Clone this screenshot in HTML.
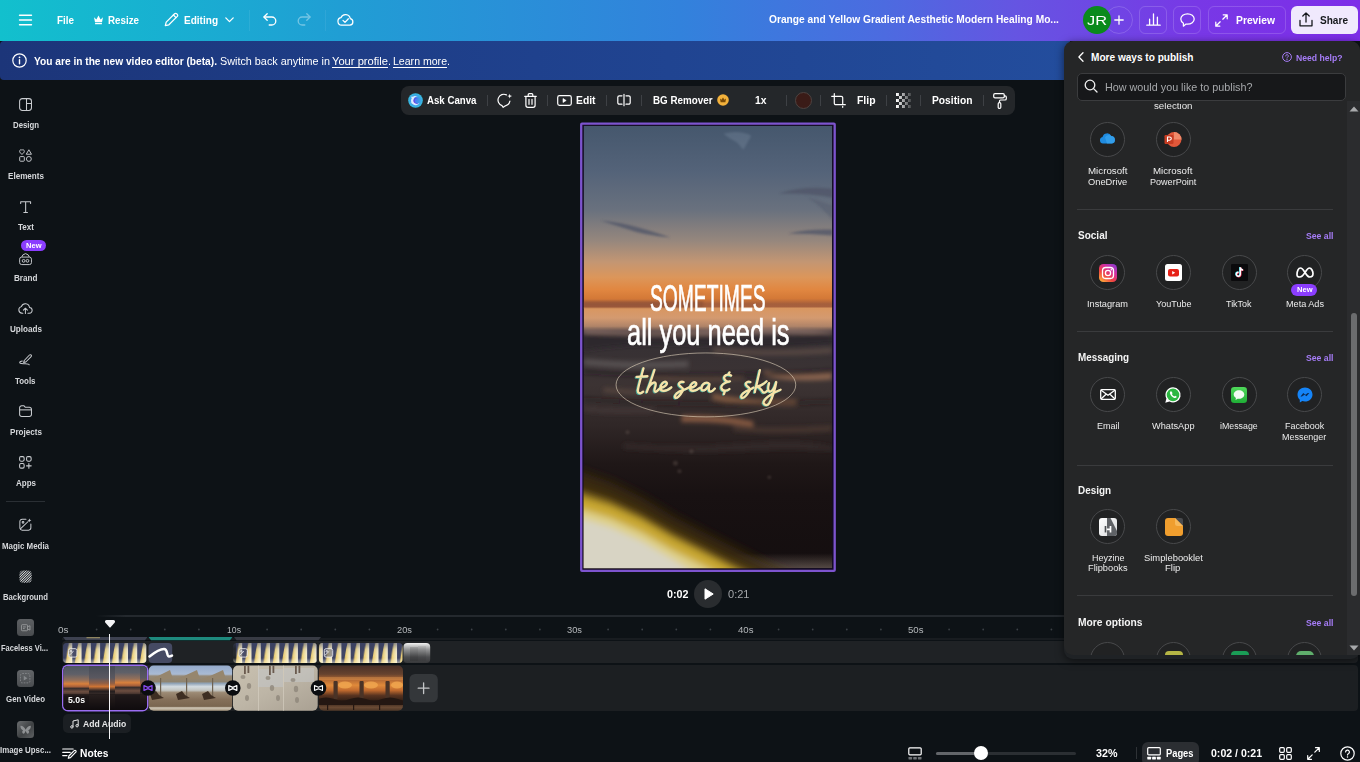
<!DOCTYPE html>
<html><head><meta charset="utf-8">
<style>
*{box-sizing:border-box;margin:0;padding:0}
html,body{width:1360px;height:762px;overflow:hidden;background:#0d1216;font-family:"Liberation Sans",sans-serif;color:#fff}
.abs{position:absolute}
svg{display:block;overflow:visible}
#top{position:absolute;left:0;top:0;width:1360px;height:40.700px;background:linear-gradient(90deg,#12c0cd 0%,#18b0d1 12%,#209ed4 25%,#3282dc 50%,#4c6be0 65%,#6654e2 75%,#7838e6 88%,#7d2de8 100%)}
#banner{position:absolute;left:0;top:40.600px;width:1070px;height:39.800px;background:linear-gradient(90deg,#1c3579 0%,#1f418d 50%,#234d9d 100%);border-radius:4px 0 0 4px}
.ob{position:absolute;top:6px;height:28px;border-radius:6px;border:1px solid rgba(255,255,255,.16)}
#tb{position:absolute;left:401px;top:86px;width:614px;height:29px;background:#24272a;border-radius:8px}
.sep{position:absolute;top:95px;width:1px;height:11px;background:#3e4145}
#panel{position:absolute;left:1064px;top:40.500px;width:296px;height:614.500px;background:#252627;border-radius:9px 9px 0 9px}
.hr{position:absolute;left:1077px;width:256px;height:1px;background:#3a3b3d}
.circ{position:absolute;margin:.400px;width:35.200px;height:35.200px;border-radius:50%;border:1px solid #48494b;background:#212223}
</style></head><body>
<!-- TOP BAR -->
<div id="top"></div>
<svg class="abs" style="left:19px;top:14px" width="13" height="12" viewBox="0 0 13 12"><path d="M0.5 1.2h12M0.5 6h12M0.5 10.8h12" stroke="#fff" stroke-width="1.4" stroke-linecap="round"/></svg>
<span style="position:absolute;left:57px;top:15.2px;font-size:10.5px;font-weight:bold;color:#fff;white-space:nowrap;line-height:1;transform:scaleX(0.940);transform-origin:0 50%;">File</span>
<svg class="abs" style="left:93px;top:14px" width="11" height="11" viewBox="0 0 11 11"><path d="M1 3.2l2.4 2.2L5.5 1.6l2.1 3.8L10 3.2l-1 5H2z" fill="#fff"/><rect x="2" y="9" width="7" height="1.2" rx=".5" fill="#fff"/></svg>
<span style="position:absolute;left:108px;top:15.2px;font-size:10.5px;font-weight:bold;color:#fff;white-space:nowrap;line-height:1;transform:scaleX(0.931);transform-origin:0 50%;">Resize</span>
<svg class="abs" style="left:164px;top:12px" width="15" height="15" viewBox="0 0 15 15" fill="none" stroke="#fff" stroke-width="1.25" stroke-linejoin="round" stroke-linecap="round"><path d="M1.3 13.7l.9-3.6L10.6 1.7a1.4 1.4 0 0 1 2 0l.7.7a1.4 1.4 0 0 1 0 2L4.9 12.8z"/><path d="M9.4 3l2.6 2.6"/></svg>
<span style="position:absolute;left:184px;top:15.2px;font-size:10.5px;font-weight:bold;color:#fff;white-space:nowrap;line-height:1;transform:scaleX(0.956);transform-origin:0 50%;">Editing</span>
<svg class="abs" style="left:225px;top:17px" width="9" height="6" viewBox="0 0 9 6" fill="none" stroke="#fff" stroke-width="1.3" stroke-linecap="round" stroke-linejoin="round"><path d="M.8.9l3.7 3.7L8.2.9"/></svg>
<div class="abs" style="left:249px;top:10px;width:1px;height:21px;background:rgba(255,255,255,.07)"></div>
<svg class="abs" style="left:263px;top:13px" width="14" height="13" viewBox="0 0 14 13" fill="none" stroke="#fff" stroke-width="1.3" stroke-linecap="round" stroke-linejoin="round"><path d="M4.2.8L.9 4l3.3 3.2"/><path d="M1.2 4h7.6a4 4 0 0 1 0 8H6.2"/></svg>
<svg class="abs" style="left:297px;top:13px;opacity:.38" width="14" height="13" viewBox="0 0 14 13" fill="none" stroke="#fff" stroke-width="1.3" stroke-linecap="round" stroke-linejoin="round"><path d="M9.8.8L13.1 4 9.8 7.2"/><path d="M12.8 4H5.2a4 4 0 0 0 0 8h2.6"/></svg>
<div class="abs" style="left:325px;top:10px;width:1px;height:21px;background:rgba(255,255,255,.07)"></div>
<svg class="abs" style="left:337px;top:13px" width="17" height="13" viewBox="0 0 17 13" fill="none" stroke="#fff" stroke-width="1.25" stroke-linecap="round" stroke-linejoin="round"><path d="M4.6 12.2a3.8 3.8 0 0 1-.7-7.5 4.9 4.9 0 0 1 9.4 1 3.3 3.3 0 0 1-.4 6.5z"/><path d="M6 7.4l2 2 3.4-3.6"/></svg>
<span style="position:absolute;left:769px;top:15.4px;font-size:10.08px;font-weight:bold;color:#fff;white-space:nowrap;line-height:1;transform:scaleX(1.013);transform-origin:0 50%;">Orange and Yellow Gradient Aesthetic Modern Healing Mo...</span>
<div class="abs" style="left:1105px;top:6px;width:28px;height:28px;border-radius:50%;border:1px solid rgba(255,255,255,.16)"></div>
<svg class="abs" style="left:1114px;top:15px" width="10" height="10" viewBox="0 0 10 10" stroke="#fff" stroke-width="1.3" stroke-linecap="round"><path d="M5 .8v8.4M.8 5h8.4"/></svg>
<div class="abs" style="left:1082.700px;top:6px;width:28px;height:28px;border-radius:50%;background:#0a8a1c"></div>
<span style="position:absolute;left:1087px;top:14.2px;font-size:13.44px;font-weight:normal;color:#fff;white-space:nowrap;line-height:1;transform:scaleX(1.217);transform-origin:0 50%;">JR</span>
<div class="ob" style="left:1139px;width:28px"></div>
<svg class="abs" style="left:1146px;top:13px" width="15" height="13" viewBox="0 0 15 13" stroke="#fff" stroke-width="1.3" stroke-linecap="round" fill="none"><path d="M.8 12.2h13.4M3.6 12V6.2M7.5 12V1M11.4 12V4.2"/></svg>
<div class="ob" style="left:1173px;width:28px"></div>
<svg class="abs" style="left:1180px;top:13px" width="15" height="14" viewBox="0 0 15 14" fill="none" stroke="#fff" stroke-width="1.25" stroke-linejoin="round"><path d="M7.5.8c3.7 0 6.7 2.3 6.7 5.2s-3 5.2-6.7 5.2c-.5 0-1 0-1.5-.1L3.4 13.2V10.200C1.800 9.200.8 7.700.8 6 .8 3.100 3.800.8 7.500.8z"/></svg>
<div class="ob" style="left:1208px;width:78px"></div>
<svg class="abs" style="left:1215px;top:14px" width="13" height="13" viewBox="0 0 13 13" fill="none" stroke="#fff" stroke-width="1.25" stroke-linecap="round" stroke-linejoin="round"><path d="M8.200.8h4v4M12 1L7.800 5.200M4.800 12.200h-4v-4M1 12l4.200-4.200"/></svg>
<span style="position:absolute;left:1236px;top:15.2px;font-size:10.5px;font-weight:bold;color:#fff;white-space:nowrap;line-height:1;transform:scaleX(0.982);transform-origin:0 50%;">Preview</span>
<div class="abs" style="left:1291px;top:6px;width:67px;height:28px;border-radius:6px;background:#f0e9fd"></div>
<svg class="abs" style="left:1299px;top:12px" width="14" height="15" viewBox="0 0 14 15" fill="none" stroke="#15181c" stroke-width="1.3" stroke-linecap="round" stroke-linejoin="round"><path d="M7 10V1M3.800 4L7 .9 10.200 4M1 8.500v5.300h12V8.500"/></svg>
<span style="position:absolute;left:1320px;top:15.2px;font-size:10.5px;font-weight:bold;color:#15181c;white-space:nowrap;line-height:1;transform:scaleX(0.959);transform-origin:0 50%;">Share</span>

<!-- BANNER -->
<div id="banner"></div>
<svg class="abs" style="left:12px;top:53px" width="15" height="15" viewBox="0 0 15 15" fill="none" stroke="#fff" stroke-width="1.2"><circle cx="7.500" cy="7.500" r="6.700"/><path d="M7.500 6.800v4" stroke-linecap="round" stroke-width="1.400"/><circle cx="7.500" cy="4.300" r=".9" fill="#fff" stroke="none"/></svg>
<span style="position:absolute;left:34px;top:55.7px;font-size:10.5px;font-weight:bold;color:#fff;white-space:nowrap;line-height:1;transform:scaleX(0.969);transform-origin:0 50%;">You are in the new video editor (beta).</span>
<span style="position:absolute;left:220px;top:55.7px;font-size:10.5px;font-weight:normal;color:#fff;white-space:nowrap;line-height:1;transform:scaleX(1.030);transform-origin:0 50%;">Switch back anytime in</span>
<span style="position:absolute;left:332px;top:55.7px;font-size:10.5px;font-weight:normal;color:#fff;white-space:nowrap;line-height:1;transform:scaleX(1.062);transform-origin:0 50%;text-decoration:underline;text-underline-offset:2px">Your profile</span>
<span style="position:absolute;left:388px;top:55.7px;font-size:10.5px;font-weight:normal;color:#fff;white-space:nowrap;line-height:1;transform:scaleX(1.027);transform-origin:0 50%;">.</span>
<span style="position:absolute;left:393px;top:55.7px;font-size:10.5px;font-weight:normal;color:#fff;white-space:nowrap;line-height:1;transform:scaleX(1.006);transform-origin:0 50%;text-decoration:underline;text-underline-offset:2px">Learn more</span>
<span style="position:absolute;left:447px;top:55.7px;font-size:10.5px;font-weight:normal;color:#fff;white-space:nowrap;line-height:1;transform:scaleX(1.027);transform-origin:0 50%;">.</span>
<!-- SIDEBAR -->

<!-- design -->
<svg class="abs" style="left:19.0px;top:98.0px" width="13.1" height="13.1" viewBox="0 0 15 15" fill="none" stroke="#c9ccd0" stroke-width="1.2"><rect x=".7" y=".7" width="13.6" height="13.6" rx="3"/><path d="M8.6.8v13.4M8.600 6.200h5.600"/></svg>
<span style="position:absolute;left:12.5px;top:121.7px;font-size:8.15px;font-weight:bold;color:#d6d8db;white-space:nowrap;line-height:1;transform:scaleX(0.960);transform-origin:0 50%;">Design</span>
<!-- elements -->
<svg class="abs" style="left:19.0px;top:149.0px" width="13.1" height="13.1" viewBox="0 0 15 15" fill="none" stroke="#c9ccd0" stroke-width="1.1" stroke-linejoin="round"><path d="M3.400 6.100C1.800 4.900.700 4 .700 2.700.700 1.600 1.500.800 2.400.800c.5 0 .8.200 1 .600.200-.4.600-.6 1-.600.900 0 1.700.8 1.700 1.900 0 1.300-1.100 2.200-2.700 3.400z"/><path d="M11.300.900l3 5.100H8.300z"/><rect x=".8" y="8.700" width="5.300" height="5.300" rx=".8"/><circle cx="11.300" cy="11.400" r="2.800"/></svg>
<span style="position:absolute;left:7.5px;top:172.7px;font-size:8.15px;font-weight:bold;color:#d6d8db;white-space:nowrap;line-height:1;transform:scaleX(0.996);transform-origin:0 50%;">Elements</span>
<!-- text -->
<svg class="abs" style="left:19.8px;top:200.9px" width="11.3" height="12.2" viewBox="0 0 13 14" fill="none" stroke="#c9ccd0" stroke-width="1.2" stroke-linecap="round" stroke-linejoin="round"><path d="M.800 2.800V.800h11.400v2M6.500.800v12.400M4.400 13.200h4.200"/></svg>
<span style="position:absolute;left:17.5px;top:223.7px;font-size:8.15px;font-weight:bold;color:#d6d8db;white-space:nowrap;line-height:1;transform:scaleX(0.993);transform-origin:0 50%;">Text</span>
<!-- brand -->
<svg class="abs" style="left:19.0px;top:252.8px" width="13.1" height="12.2" viewBox="0 0 15 14" fill="none" stroke="#c9ccd0" stroke-width="1.100" stroke-linejoin="round"><rect x=".700" y="4.700" width="13.600" height="8.600" rx="2.400"/><path d="M3.200 4.500l1.200-2.300 3.100-1.500 3.100 1.500 1.200 2.300"/><circle cx="5.300" cy="9" r="1.600"/><circle cx="9.700" cy="9" r="1.600"/></svg>
<div class="abs" style="left:21px;top:239.500px;width:25px;height:11.500px;border-radius:6px;background:#8b3dff"></div>
<span style="position:absolute;left:26px;top:242.5px;font-size:6.72px;font-weight:bold;color:#fff;white-space:nowrap;line-height:1;transform:scaleX(1.121);transform-origin:0 50%;">New</span>
<span style="position:absolute;left:14px;top:274.7px;font-size:8.15px;font-weight:bold;color:#d6d8db;white-space:nowrap;line-height:1;transform:scaleX(1.001);transform-origin:0 50%;">Brand</span>
<!-- uploads -->
<svg class="abs" style="left:18.1px;top:301.9px" width="14.8" height="12.2" viewBox="0 0 17 14" fill="none" stroke="#c9ccd0" stroke-width="1.150" stroke-linecap="round" stroke-linejoin="round"><path d="M5.600 12.800H4.600a3.800 3.800 0 0 1-.700-7.500 4.800 4.800 0 0 1 9.300.900 3.300 3.300 0 0 1-.500 6.600h-1.300"/><path d="M8.500 13.200V7.400M6.200 9.400l2.300-2.300 2.300 2.300"/></svg>
<span style="position:absolute;left:9.5px;top:325.7px;font-size:8.15px;font-weight:bold;color:#d6d8db;white-space:nowrap;line-height:1;transform:scaleX(0.998);transform-origin:0 50%;">Uploads</span>
<!-- tools -->
<svg class="abs" style="left:19.0px;top:353.0px" width="13.1" height="13.1" viewBox="0 0 15 15" fill="none" stroke="#c9ccd0" stroke-width="1.150" stroke-linecap="round" stroke-linejoin="round"><path d="M6 8.600L12 2.300a1.300 1.300 0 0 1 1.900 1.800L7.800 10.300l-2.500.700z"/><path d="M3.800 9.200c-2 .200-3 1-3 1.800 0 1.400 3.200 1.200 6.200 1.200 2.500 0 4.700.200 4.700 1.300"/></svg>
<span style="position:absolute;left:15px;top:377.7px;font-size:8.15px;font-weight:bold;color:#d6d8db;white-space:nowrap;line-height:1;transform:scaleX(0.973);transform-origin:0 50%;">Tools</span>
<!-- projects -->
<svg class="abs" style="left:19.0px;top:404.9px" width="13.1" height="12.2" viewBox="0 0 15 14" fill="none" stroke="#c9ccd0" stroke-width="1.200" stroke-linejoin="round"><path d="M.700 3.200A2.400 2.400 0 0 1 3.100.800h2.400l1.800 1.900h4.600a2.400 2.400 0 0 1 2.400 2.400v5.800a2.400 2.400 0 0 1-2.400 2.400H3.100A2.400 2.400 0 0 1 .700 10.900z"/><path d="M.800 5.600h13.400"/></svg>
<span style="position:absolute;left:9.5px;top:428.7px;font-size:8.15px;font-weight:bold;color:#d6d8db;white-space:nowrap;line-height:1;transform:scaleX(0.998);transform-origin:0 50%;">Projects</span>
<!-- apps -->
<svg class="abs" style="left:19.0px;top:456.0px" width="13.1" height="13.1" viewBox="0 0 15 15" fill="none" stroke="#c9ccd0" stroke-width="1.200" stroke-linecap="round"><rect x=".700" y=".700" width="5.200" height="5.200" rx="1.500"/><rect x="8.700" y=".700" width="5.200" height="5.200" rx="1.500"/><rect x=".700" y="8.700" width="5.200" height="5.200" rx="1.500"/><path d="M11.300 8.600v5.400M8.600 11.300h5.400"/></svg>
<span style="position:absolute;left:15.5px;top:479.7px;font-size:8.15px;font-weight:bold;color:#d6d8db;white-space:nowrap;line-height:1;transform:scaleX(0.985);transform-origin:0 50%;">Apps</span>
<div class="abs" style="left:6px;top:501px;width:39px;height:1px;background:#2a2f34"></div>
<!-- magic media -->
<svg class="abs" style="left:19.0px;top:518.0px" width="13.1" height="13.1" viewBox="0 0 15 15" fill="none" stroke="#c9ccd0" stroke-width="1.150" stroke-linecap="round" stroke-linejoin="round"><path d="M8 1.300H3.600A2.600 2.600 0 0 0 1 3.900v7.400a2.600 2.600 0 0 0 2.600 2.600h7.400a2.600 2.600 0 0 0 2.600-2.600V7"/><path d="M1.600 12.500L10.500 4"/><circle cx="4.600" cy="5" r="1" /><path d="M12 .500l.6 1.600 1.600.6-1.600.6-.6 1.600-.6-1.600-1.600-.6 1.600-.6z" fill="#c9ccd0" stroke="none"/></svg>
<span style="position:absolute;left:2px;top:542.7px;font-size:8.15px;font-weight:bold;color:#d6d8db;white-space:nowrap;line-height:1;transform:scaleX(0.973);transform-origin:0 50%;">Magic Media</span>
<!-- background -->
<svg class="abs" style="left:19.0px;top:570.0px" width="13.1" height="13.1" viewBox="0 0 15 15"><defs><pattern id="hatch" width="2" height="2" patternUnits="userSpaceOnUse" patternTransform="rotate(45)"><rect width="1" height="2" fill="#d8dadc"/></pattern></defs><rect x=".500" y=".500" width="14" height="14" rx="4.500" fill="url(#hatch)"/></svg>
<span style="position:absolute;left:3px;top:593.7px;font-size:8.15px;font-weight:bold;color:#d6d8db;white-space:nowrap;line-height:1;transform:scaleX(0.949);transform-origin:0 50%;">Background</span>
<!-- faceless -->
<div class="abs" style="left:17px;top:619px;width:17px;height:17px;border-radius:3.500px;background:linear-gradient(180deg,#5d6063,#494c4f)"></div>
<svg class="abs" style="left:20.7px;top:623.6px" width="9.6" height="7.8" viewBox="0 0 11 9" fill="none" stroke="#9a9c9e" stroke-width="1"><rect x=".500" y=".800" width="7" height="7" rx="1"/><path d="M7.500 3.200l2.800-1.200v5l-2.800-1.200M2.200 3.400h3.300M2.200 5.300h2"/></svg>
<span style="position:absolute;left:0.5px;top:644.7px;font-size:8.15px;font-weight:bold;color:#d6d8db;white-space:nowrap;line-height:1;transform:scaleX(0.923);transform-origin:0 50%;">Faceless Vi...</span>
<!-- gen video -->
<div class="abs" style="left:17px;top:670px;width:17px;height:17px;border-radius:3.500px;background:linear-gradient(180deg,#626568,#4a4d50)"></div>
<svg class="abs" style="left:20.3px;top:673.3px" width="10.4" height="10.4" viewBox="0 0 12 12" fill="none" stroke="#85888b" stroke-width="1"><rect x=".600" y=".600" width="10.800" height="10.800" rx="2" stroke-dasharray="2 1.200"/><path d="M4.300 3.300l4.300 2.700-4.300 2.700z" fill="#85888b" stroke="none"/></svg>
<span style="position:absolute;left:6px;top:695.7px;font-size:8.15px;font-weight:bold;color:#d6d8db;white-space:nowrap;line-height:1;transform:scaleX(0.974);transform-origin:0 50%;">Gen Video</span>
<!-- image upscaler -->
<div class="abs" style="left:17px;top:721px;width:17px;height:17px;border-radius:3.500px;background:linear-gradient(135deg,#6b6e70,#3e4143 55%,#5f6264)"></div>
<svg class="abs" style="left:19.8px;top:724.7px" width="11.3" height="9.6" viewBox="0 0 13 11" fill="#8e9193"><path d="M6.500 5.500C5 2 2 .500.500 1c0 3 1.500 4.500 3 5C2 7 2.500 10 4 10c1.200 0 2-2 2.500-3.500C7 8 7.800 10 9 10c1.500 0 2-3 .500-4 1.500-.500 3-2 3-5-1.500-.500-4.500 1-6 4.500z"/></svg>
<span style="position:absolute;left:0px;top:746.7px;font-size:8.15px;font-weight:bold;color:#d6d8db;white-space:nowrap;line-height:1;transform:scaleX(0.973);transform-origin:0 50%;">Image Upsc...</span>

<!-- FLOATING TOOLBAR -->
<div id="tb"></div>
<svg class="abs" style="left:408px;top:93px" width="15" height="15" viewBox="0 0 15 15"><defs><radialGradient id="ag" cx=".5" cy=".5" r=".5"><stop offset="0" stop-color="#4a7af0"/><stop offset=".55" stop-color="#3f9ae8"/><stop offset="1" stop-color="#35bfe0"/></radialGradient></defs><circle cx="7.500" cy="7.500" r="7.300" fill="url(#ag)"/><path d="M10 3.600A4.600 4.600 0 1 0 11.600 9.800 3.600 3.600 0 1 1 10 3.600z" fill="#dfeaff"/><path d="M9.800 5.200A2.900 2.900 0 1 0 10.600 9.600 2.500 2.500 0 1 1 9.800 5.200z" fill="#6a3de0"/><circle cx="4" cy="4.300" r=".7" fill="#fff"/><circle cx="3.200" cy="9.800" r=".5" fill="#fff" opacity=".8"/></svg>
<span style="position:absolute;left:427px;top:95.9px;font-size:10.08px;font-weight:bold;color:#fff;white-space:nowrap;line-height:1;transform:scaleX(0.960);transform-origin:0 50%;">Ask Canva</span>
<div class="sep" style="left:487px"></div>
<svg class="abs" style="left:497px;top:92.500px" width="16" height="15" viewBox="0 0 16 15" fill="none" stroke="#fff" stroke-width="1.200" stroke-linecap="round" stroke-linejoin="round"><path d="M9.400 1.900A5.800 5.800 0 1 0 5 12.600L6.200 14.300 8.400 12.800A5.800 5.800 0 0 0 12.900 8.200"/><path d="M12.700.700l.6 1.800 1.800.6-1.800.6-.6 1.800-.6-1.800-1.800-.6 1.800-.6z" fill="#fff" stroke="none"/></svg>
<svg class="abs" style="left:524px;top:92.500px" width="13" height="15" viewBox="0 0 13 15" fill="none" stroke="#fff" stroke-width="1.200" stroke-linecap="round" stroke-linejoin="round"><path d="M.700 3.300h11.600M4.200 3.200V1.700a1 1 0 0 1 1-1h2.600a1 1 0 0 1 1 1v1.500M1.900 3.500v8.800a2 2 0 0 0 2 2h5.200a2 2 0 0 0 2-2V3.500M5 6.300v5M8 6.300v5"/></svg>
<div class="sep" style="left:547px"></div>
<svg class="abs" style="left:557px;top:94.500px" width="15" height="11" viewBox="0 0 15 11" fill="none" stroke="#fff" stroke-width="1.200" stroke-linejoin="round"><rect x=".700" y=".700" width="13.600" height="9.600" rx="1.800"/><path d="M6 3.500l3.200 2-3.200 2z" fill="#fff" stroke-width=".600"/></svg>
<span style="position:absolute;left:576px;top:95.9px;font-size:10.08px;font-weight:bold;color:#fff;white-space:nowrap;line-height:1;transform:scaleX(1.024);transform-origin:0 50%;">Edit</span>
<div class="sep" style="left:606px"></div>
<svg class="abs" style="left:617px;top:94px" width="14" height="12" viewBox="0 0 14 12" fill="none" stroke="#fff" stroke-width="1.200" stroke-linecap="round" stroke-linejoin="round"><path d="M7 .300v11.400M5 1.800H2.300A1.500 1.500 0 0 0 .800 3.300v5.400a1.500 1.500 0 0 0 1.500 1.500H5M9 1.800h2.700a1.500 1.500 0 0 1 1.500 1.500v5.400a1.500 1.500 0 0 1-1.500 1.500H9"/></svg>
<div class="sep" style="left:641px"></div>
<span style="position:absolute;left:653px;top:95.9px;font-size:10.08px;font-weight:bold;color:#fff;white-space:nowrap;line-height:1;transform:scaleX(0.974);transform-origin:0 50%;">BG Remover</span>
<svg class="abs" style="left:717px;top:94px" width="12" height="12" viewBox="0 0 12 12"><circle cx="6" cy="6" r="5.800" fill="#f2b13b"/><path d="M3 4.500l1.500 1.300L6 3.500l1.500 2.300L9 4.500l-.600 3.700H3.600z" fill="#7a4a05"/></svg>
<span style="position:absolute;left:755px;top:95.9px;font-size:10.08px;font-weight:bold;color:#fff;white-space:nowrap;line-height:1;transform:scaleX(1.025);transform-origin:0 50%;">1x</span>
<div class="sep" style="left:786px"></div>
<div class="abs" style="left:795px;top:92px;width:17px;height:17px;border-radius:50%;background:#3a1b17;border:1px solid #4d4341"></div>
<div class="sep" style="left:820px"></div>
<svg class="abs" style="left:831px;top:93px" width="15" height="15" viewBox="0 0 15 15" fill="none" stroke="#fff" stroke-width="1.200" stroke-linecap="round" stroke-linejoin="round"><path d="M3.300.700v9.500a1.500 1.500 0 0 0 1.500 1.500h9.500M.700 3.300h9.500a1.500 1.500 0 0 1 1.500 1.500v6.200M11.700 13.300v1"/></svg>
<span style="position:absolute;left:857px;top:95.9px;font-size:10.08px;font-weight:bold;color:#fff;white-space:nowrap;line-height:1;transform:scaleX(1.032);transform-origin:0 50%;">Flip</span>
<div class="sep" style="left:886px"></div>
<svg class="abs" style="left:896px;top:93px" width="15" height="15" viewBox="0 0 15 15"><defs><pattern id="chk" width="6" height="6" patternUnits="userSpaceOnUse"><rect width="3" height="3" fill="#fff"/><rect x="3" y="3" width="3" height="3" fill="#fff"/></pattern><linearGradient id="chf" x1="0" x2="1"><stop offset="0" stop-color="#fff"/><stop offset="1" stop-color="#fff" stop-opacity=".150"/></linearGradient><mask id="chm"><rect width="15" height="15" fill="url(#chf)"/></mask></defs><rect width="15" height="15" fill="url(#chk)" mask="url(#chm)"/></svg>
<div class="sep" style="left:920px"></div>
<span style="position:absolute;left:932px;top:95.9px;font-size:10.08px;font-weight:bold;color:#fff;white-space:nowrap;line-height:1;transform:scaleX(1.018);transform-origin:0 50%;">Position</span>
<div class="sep" style="left:983px"></div>
<svg class="abs" style="left:993px;top:92.500px" width="14" height="16" viewBox="0 0 14 16" fill="none" stroke="#fff" stroke-width="1.200" stroke-linecap="round" stroke-linejoin="round"><rect x=".700" y=".700" width="10.600" height="4.200" rx="1.300"/><path d="M11.300 2.800h.700a1.300 1.300 0 0 1 1.300 1.300v1.600a1.300 1.300 0 0 1-1.300 1.300H7.500a1 1 0 0 0-1 1V9.500"/><rect x="5.200" y="9.600" width="2.600" height="5.700" rx="1.100"/></svg>
<!-- CANVAS -->
<svg class="abs" style="left:570px;top:115px" width="280" height="465" viewBox="570 115 280 465"><rect x="581.200" y="123.700" width="253.500" height="447.100" rx=".8" fill="#130b22" stroke="#7d54ce" stroke-width="2.300"/><svg x="583.600" y="125.700" width="248.600" height="442.500" viewBox="0 0 249 443" preserveAspectRatio="none" style="overflow:hidden">
<defs>
<linearGradient id="sky" x1="0" y1="0" x2="0" y2="1">
<stop offset="0" stop-color="#45576d"/><stop offset=".25" stop-color="#546379"/><stop offset=".46" stop-color="#69717e"/><stop offset=".63" stop-color="#96877d"/><stop offset=".745" stop-color="#c39673"/><stop offset=".83" stop-color="#dc965a"/><stop offset=".895" stop-color="#e18741"/><stop offset=".945" stop-color="#d47937"/><stop offset=".975" stop-color="#a55f3c"/><stop offset="1" stop-color="#a86240"/>
</linearGradient>
<linearGradient id="sea" x1="0" y1="0" x2="0" y2="1">
<stop offset="0" stop-color="#d9965f"/><stop offset=".04" stop-color="#d49a70"/><stop offset=".072" stop-color="#b08468"/><stop offset=".09" stop-color="#5a4a4a"/><stop offset=".11" stop-color="#332e33"/><stop offset=".16" stop-color="#373134"/><stop offset=".3" stop-color="#3c3333"/><stop offset=".45" stop-color="#302727"/><stop offset=".6" stop-color="#1f1717"/><stop offset=".72" stop-color="#181112"/><stop offset="1" stop-color="#140e0f"/>
</linearGradient>
<linearGradient id="bg2" x1="0" y1="0" x2="0" y2="1"><stop offset="0" stop-color="#8a7a70" stop-opacity="0"/><stop offset="1" stop-color="#8a7a70" stop-opacity=".55"/></linearGradient>
<filter id="bl" x="-20%" y="-20%" width="140%" height="140%"><feGaussianBlur stdDeviation="2.200"/></filter>
<filter id="bl2"><feGaussianBlur stdDeviation="1.200"/></filter>
<filter id="bl4" x="-20%" y="-20%" width="140%" height="140%"><feGaussianBlur stdDeviation="3.200"/></filter>
<filter id="bl5" x="-20%" y="-20%" width="140%" height="140%"><feGaussianBlur stdDeviation="5.500"/></filter>
</defs>
<rect width="249" height="183" fill="url(#sky)"/>
<rect y="182" width="249" height="261" fill="url(#sea)"/>
<rect y="176" width="120" height="6" fill="#8f5238" opacity=".7" filter="url(#bl2)"/>
<!-- clouds -->
<g filter="url(#bl2)" fill="#4f5568" opacity=".75"><path d="M17 95q22 2 38 7 18 5 32 10-26-2-42-8-16-5-28-9z"/><path d="M196 68q22-8 53-5v9q-26-5-53-4z"/><path d="M205 108q20-5 44-4v6q-22-2-44-2z"/><path d="M225 72q14 10 24 22v-14z" opacity=".5"/></g>
<g filter="url(#bl2)" fill="#8394a8" opacity=".3"><path d="M140 8q16-4 28 2l-8 14-6-7q-8-4-14-9z"/></g>
<!-- waves -->
<g filter="url(#bl)"><path d="M0 210q60-6 120 0t129-4v12q-70 6-129 2T0 225z" fill="#29242a" opacity=".8"/><path d="M0 204q70 4 130 0t119 2v3q-60-2-119 1T0 208z" fill="#a98878" opacity=".5"/>
<path d="M0 233q50 5 105 2v7q-55 3-105-2z" fill="#6a6465" opacity=".55"/>
<path d="M130 222q50 5 119 0v6q-60 4-119 0z" fill="#6f5a50" opacity=".5"/>
<path d="M181 245q30 6 68 2v7q-40 3-68-3z" fill="#a8785a" opacity=".7"/>
<path d="M129 268q40 8 84 6v6q-46 2-84-6z" fill="#a06c4a" opacity=".65"/>
<path d="M98 290q36-2 72 6v6q-36-6-72-5z" fill="#a06a48" opacity=".7"/>
<path d="M20 262q40 4 80 2v5q-40 2-80-2z" fill="#6a5248" opacity=".5"/>
<path d="M60 250q50 4 100 0v4q-50 4-100 0z" fill="#7a5a48" opacity=".45"/>
<path d="M150 300q40 4 99 0v6q-50 4-99 0z" fill="#5a4438" opacity=".5"/>
<path d="M0 280q30 4 70 2v6q-40 2-70-2z" fill="#4a3e3c" opacity=".5"/>
<path d="M40 318q60 5 120 0t89 3v5q-40-3-89 0t-120-2z" fill="#3e3230" opacity=".5"/>
<path d="M0 244q120 8 249 0v4q-120 8-249 0z" fill="#1e1a1e" opacity=".55"/>
<path d="M0 272q120 8 249 2v4q-120 6-249-2z" fill="#1e1a1c" opacity=".45"/></g>
<g fill="#7a6a62" opacity=".3" filter="url(#bl2)"><circle cx="92" cy="338" r="2.500"/><circle cx="108" cy="326" r="2.200"/><circle cx="44" cy="307" r="2"/><circle cx="186" cy="352" r="1.800"/><circle cx="96" cy="346" r="2"/></g>
<!-- bottom blob -->
<rect y="428" width="249" height="15" fill="url(#bg2)"/>
<g filter="url(#bl5)" transform="translate(0 3)"><path d="M-20 338L1 345 27 354 58 369 89 388 120 404 150 419 187 438 215 450V470H-20z" fill="#3d2c12" opacity=".9"/></g>
<g filter="url(#bl4)" transform="translate(0 4)"><path d="M-20 356L1 362 27 370.500 58 385 89 403 120 418.500 150 434 175 446V470H-20z" fill="#83691f"/><path d="M-20 363L1 369 27 377 58 391 89 409 120 424.500 150 440 165 448V470H-20z" fill="#c9a832"/><path d="M-20 375L1 381 27 389 58 403 89 421 120 436.500 140 447V470H-20z" fill="#ded08a"/><path d="M-20 384L1 390 27 398 58 412 89 430 112 444V470H-20z" fill="#d8d4c4"/></g>
<ellipse cx="122.500" cy="259.500" rx="90" ry="32" fill="none" stroke="#e9dcc4" stroke-width=".700" opacity=".85"/>
</svg></svg>
<span style="position:absolute;left:650px;top:281.2px;font-size:36px;font-weight:normal;color:#fff;white-space:nowrap;line-height:1;transform:scaleX(0.535);transform-origin:0 50%;-webkit-text-stroke:.7px #fff">SOMETIMES</span>
<span style="position:absolute;left:627px;top:314.7px;font-size:36px;font-weight:normal;color:#fff;white-space:nowrap;line-height:1;transform:scaleX(0.706);transform-origin:0 50%;-webkit-text-stroke:.7px #fff">all you need is</span>
<svg class="abs" style="left:626px;top:362px" width="164" height="48" viewBox="0 0 1360 398" fill="none" stroke-linecap="round" stroke-linejoin="round"><path d="M145 52C130 110 105 190 98 235 96 262 120 268 142 246M88 124L178 118M236 66C220 120 190 200 172 250M185 215C205 180 235 160 245 175 255 195 225 235 240 245 250 250 262 240 272 226M284 215C320 210 350 185 335 168 320 152 286 180 286 215 286 245 330 250 376 210M478 166C455 158 428 175 444 196 460 213 482 216 471 237 456 264 432 300 412 298 396 290 410 262 440 246 470 233 500 226 522 210M532 215C566 210 592 190 580 172 566 158 532 180 532 215 532 245 572 248 612 214M692 182C672 160 632 175 626 215 622 248 662 244 692 186 686 215 682 245 702 245 716 245 727 232 737 220M872 112C842 96 806 110 816 140 823 160 850 166 862 160 822 166 782 190 792 220 802 246 842 240 858 224M822 238L812 266M852 98L858 86M1032 166C1010 158 984 172 998 193 1012 211 1036 213 1026 236 1010 263 986 300 962 298 946 290 960 262 990 246 1016 233 1040 226 1056 212M1110 68C1098 120 1080 200 1068 250M1166 160C1140 186 1110 200 1086 205 1110 210 1126 235 1136 250 1146 258 1160 250 1172 238M1186 176C1180 200 1170 235 1190 245 1216 250 1236 200 1246 166 1240 210 1216 300 1190 340 1176 365 1150 360 1140 340 1140 310 1200 260 1282 230" stroke="#46a596" stroke-width="19" transform="translate(-7 5)"/><path d="M145 52C130 110 105 190 98 235 96 262 120 268 142 246M88 124L178 118M236 66C220 120 190 200 172 250M185 215C205 180 235 160 245 175 255 195 225 235 240 245 250 250 262 240 272 226M284 215C320 210 350 185 335 168 320 152 286 180 286 215 286 245 330 250 376 210M478 166C455 158 428 175 444 196 460 213 482 216 471 237 456 264 432 300 412 298 396 290 410 262 440 246 470 233 500 226 522 210M532 215C566 210 592 190 580 172 566 158 532 180 532 215 532 245 572 248 612 214M692 182C672 160 632 175 626 215 622 248 662 244 692 186 686 215 682 245 702 245 716 245 727 232 737 220M872 112C842 96 806 110 816 140 823 160 850 166 862 160 822 166 782 190 792 220 802 246 842 240 858 224M822 238L812 266M852 98L858 86M1032 166C1010 158 984 172 998 193 1012 211 1036 213 1026 236 1010 263 986 300 962 298 946 290 960 262 990 246 1016 233 1040 226 1056 212M1110 68C1098 120 1080 200 1068 250M1166 160C1140 186 1110 200 1086 205 1110 210 1126 235 1136 250 1146 258 1160 250 1172 238M1186 176C1180 200 1170 235 1190 245 1216 250 1236 200 1246 166 1240 210 1216 300 1190 340 1176 365 1150 360 1140 340 1140 310 1200 260 1282 230" stroke="#f7e3a8" stroke-width="19"/></svg>
<!-- play controls -->
<span style="position:absolute;left:667px;top:588.6px;font-size:11.34px;font-weight:bold;color:#fff;white-space:nowrap;line-height:1;transform:scaleX(0.948);transform-origin:0 50%;">0:02</span>
<div class="abs" style="left:694px;top:580px;width:28px;height:28px;border-radius:50%;background:#292c2f"></div>
<svg class="abs" style="left:703.500px;top:588px" width="10" height="12" viewBox="0 0 10 12"><path d="M1 .800l8.200 5.200L1 11.200z" fill="#fff" stroke="#fff" stroke-width="1" stroke-linejoin="round"/></svg>
<span style="position:absolute;left:728px;top:588.6px;font-size:11.34px;font-weight:normal;color:#a4a7aa;white-space:nowrap;line-height:1;transform:scaleX(0.975);transform-origin:0 50%;">0:21</span>
<!-- TIMELINE -->
<div class="abs" style="left:96px;top:615px;width:968px;height:1.500px;background:linear-gradient(90deg,rgba(36,41,46,0),#24292e 30px)"></div>
<div class="abs" style="left:62px;top:638px;width:1002px;height:1.500px;background:#181c20"></div>
<!-- tracks bg -->
<div class="abs" style="left:61.500px;top:640.500px;width:1296px;height:22.500px;background:#1f2225;border-radius:4px"></div>
<div class="abs" style="left:61.500px;top:664.500px;width:1296px;height:46.500px;background:#1c1f22;border-radius:4px"></div>
<!-- ruler labels -->
<span style="position:absolute;left:57.5px;top:625.5px;font-size:8.82px;font-weight:normal;color:#b4b7ba;white-space:nowrap;line-height:1;transform:scaleX(1.128);transform-origin:0 50%;">0s</span>
<span style="position:absolute;left:226.5px;top:625.5px;font-size:8.82px;font-weight:normal;color:#b4b7ba;white-space:nowrap;line-height:1;transform:scaleX(0.985);transform-origin:0 50%;">10s</span>
<span style="position:absolute;left:396.5px;top:625.5px;font-size:8.82px;font-weight:normal;color:#b4b7ba;white-space:nowrap;line-height:1;transform:scaleX(1.055);transform-origin:0 50%;">20s</span>
<span style="position:absolute;left:567px;top:625.5px;font-size:8.82px;font-weight:normal;color:#b4b7ba;white-space:nowrap;line-height:1;transform:scaleX(1.055);transform-origin:0 50%;">30s</span>
<svg class="abs" style="left:0;top:628px" width="1064" height="3" viewBox="0 0 1064 3" fill="#3c4146"><circle cx="96.600" cy="1.500" r=".9"/><circle cx="130.700" cy="1.500" r=".9"/><circle cx="164.800" cy="1.500" r=".9"/><circle cx="198.900" cy="1.500" r=".9"/><circle cx="267.100" cy="1.500" r=".9"/><circle cx="301.200" cy="1.500" r=".9"/><circle cx="335.300" cy="1.500" r=".9"/><circle cx="369.400" cy="1.500" r=".9"/><circle cx="437.600" cy="1.500" r=".9"/><circle cx="471.700" cy="1.500" r=".9"/><circle cx="505.800" cy="1.500" r=".9"/><circle cx="539.900" cy="1.500" r=".9"/><circle cx="608.100" cy="1.500" r=".9"/><circle cx="642.200" cy="1.500" r=".9"/><circle cx="676.300" cy="1.500" r=".9"/><circle cx="710.400" cy="1.500" r=".9"/><circle cx="778.600" cy="1.500" r=".9"/><circle cx="812.700" cy="1.500" r=".9"/><circle cx="846.800" cy="1.500" r=".9"/><circle cx="880.900" cy="1.500" r=".9"/><circle cx="949.100" cy="1.500" r=".9"/><circle cx="983.200" cy="1.500" r=".9"/><circle cx="1017.300" cy="1.500" r=".9"/><circle cx="1051.400" cy="1.500" r=".9"/></svg>
<span style="position:absolute;left:737.5px;top:625.5px;font-size:8.82px;font-weight:normal;color:#b4b7ba;white-space:nowrap;line-height:1;transform:scaleX(1.090);transform-origin:0 50%;">40s</span>
<span style="position:absolute;left:908px;top:625.5px;font-size:8.82px;font-weight:normal;color:#b4b7ba;white-space:nowrap;line-height:1;transform:scaleX(1.090);transform-origin:0 50%;">50s</span>
<!-- thin bars -->
<svg class="abs" style="left:0;top:636.500px" width="440" height="4" viewBox="0 0 440 4"><path d="M63 0h84.500l-2.500 3.200H65.500z" fill="#3d4150"/><rect x="86.500" y="0" width="13.500" height="1.300" fill="#8f8560"/><path d="M148.500 0h84l-2.500 3.200H151z" fill="#1e8a7e"/><path d="M234 0h87l-2.500 3.200H236.500z" fill="#383b44"/></svg>
<!-- overlay clips -->
<svg class="abs" style="left:0;top:642.500px" width="440" height="20" viewBox="0 0 440 20">
<defs>
<linearGradient id="fr" x1="0" y1="0" x2="1" y2="0"><stop offset="0" stop-color="#3c4262"/><stop offset=".38" stop-color="#3a405e"/><stop offset=".5" stop-color="#8a7f6a"/><stop offset=".62" stop-color="#eccf78"/><stop offset=".8" stop-color="#f3e3a8"/><stop offset="1" stop-color="#f1ead0"/></linearGradient>
<linearGradient id="fr2" gradientUnits="userSpaceOnUse" x1="2.500" y1="0" x2="9.280" y2="0"><stop offset="0" stop-color="#c9a850"/><stop offset=".3" stop-color="#eccf78"/><stop offset=".65" stop-color="#f3e3a8"/><stop offset="1" stop-color="#f2ecd6"/></linearGradient>
<pattern id="frames" width="9.280" height="20" patternUnits="userSpaceOnUse" x="63"><rect width="9.280" height="20" fill="#3b4161"/><path d="M2.600 20C3.600 13 4.600 6 6 0H9.280V20z" fill="url(#fr2)"/></pattern>
<linearGradient id="frv" x1="0" y1="0" x2="0" y2="1"><stop offset="0" stop-color="#3b4160" stop-opacity=".55"/><stop offset=".3" stop-color="#3b4160" stop-opacity=".1"/><stop offset=".75" stop-color="#fff" stop-opacity="0"/><stop offset="1" stop-color="#fff6d0" stop-opacity=".55"/></linearGradient>
<linearGradient id="gr" x1="0" y1="0" x2="0" y2="1"><stop offset="0" stop-color="#f2f2f2"/><stop offset=".3" stop-color="#9a9b9c"/><stop offset=".7" stop-color="#4d4e50"/><stop offset="1" stop-color="#38393b"/></linearGradient>
<clipPath id="ca"><rect x="63" width="83.500" height="20" rx="4"/></clipPath>
<clipPath id="cb"><rect x="233" width="84.200" height="20" rx="4"/></clipPath>
<clipPath id="cc"><rect x="318.900" width="83.600" height="20" rx="4"/></clipPath>
</defs>
<g clip-path="url(#ca)"><rect x="63" width="84" height="20" fill="url(#frames)"/><rect x="63" width="84" height="20" fill="url(#frv)"/></g>
<rect x="148.500" width="23.700" height="20" rx="4" fill="#454a63"/>
<path d="M149.500 13.500c5-4 10-7.500 14.500-7.500 4 0 2.500 7.500 5 7.500 1.200 0 2-.4 3-.9" fill="none" stroke="#fff" stroke-width="2.500" stroke-linecap="round"/>
<g clip-path="url(#cb)"><rect x="233" width="85" height="20" fill="url(#frames)" transform="translate(2.900 0)"/><rect x="233" width="85" height="20" fill="url(#frv)"/></g>
<g clip-path="url(#cc)"><rect x="316" width="88" height="20" fill="url(#frames)" transform="translate(0 0)"/><rect x="318" width="85" height="20" fill="url(#frv)"/></g>
<rect x="403.500" width="26.700" height="20" rx="4" fill="url(#gr)"/>
<rect x="410" y="4" width="8" height="14" fill="#000" opacity=".12"/><rect x="418" y="3" width="8" height="15" fill="#000" opacity=".06"/>
<!-- image icons -->
<g fill="none" stroke="#e8e8ec" stroke-width=".9" stroke-linejoin="round"><g><rect x="68.600" y="5.700" width="8.400" height="8.400" rx="1.800" fill="#50546a" fill-opacity=".55"/><path d="M69 12.500l4.600-4.300"/><circle cx="71" cy="8.200" r=".8"/></g><g transform="translate(170.400 0)"><rect x="68.600" y="5.700" width="8.400" height="8.400" rx="1.800" fill="#50546a" fill-opacity=".55"/><path d="M69 12.500l4.600-4.300"/><circle cx="71" cy="8.200" r=".8"/></g><g transform="translate(255.700 0)"><rect x="68.600" y="5.700" width="8.400" height="8.400" rx="1.800" fill="#50546a" fill-opacity=".55"/><path d="M69 12.500l4.600-4.300"/><circle cx="71" cy="8.200" r=".8"/></g></g>
</svg>
<!-- video clips -->
<svg class="abs" style="left:0;top:664px" width="440" height="48" viewBox="0 0 440 48">
<defs>
<linearGradient id="v1" x1="0" y1="0" x2="0" y2="1"><stop offset="0" stop-color="#4d5560"/><stop offset=".2" stop-color="#5f6068"/><stop offset=".33" stop-color="#94705a"/><stop offset=".41" stop-color="#d9803c"/><stop offset=".47" stop-color="#a8603a"/><stop offset=".51" stop-color="#3a2e2c"/><stop offset=".58" stop-color="#6d4e40"/><stop offset=".68" stop-color="#2e2424"/><stop offset="1" stop-color="#120d0f"/></linearGradient>
<linearGradient id="v1b" x1="0" y1="0" x2="0" y2="1"><stop offset="0" stop-color="#444a55"/><stop offset=".28" stop-color="#5a5860"/><stop offset=".4" stop-color="#936044"/><stop offset=".47" stop-color="#cf7434"/><stop offset=".53" stop-color="#5e3e2e"/><stop offset=".57" stop-color="#241e1e"/><stop offset=".66" stop-color="#3e302c"/><stop offset="1" stop-color="#0f0b0d"/></linearGradient>
<linearGradient id="v2" x1="0" y1="0" x2="0" y2="1"><stop offset="0" stop-color="#93a9cb"/><stop offset=".2" stop-color="#aabbd4"/><stop offset=".24" stop-color="#968a78"/><stop offset=".36" stop-color="#8f8470"/><stop offset=".4" stop-color="#8fa2b6"/><stop offset=".47" stop-color="#d3dbe0"/><stop offset=".55" stop-color="#c2c4c0"/><stop offset=".6" stop-color="#9c8a74"/><stop offset=".75" stop-color="#85705a"/><stop offset=".9" stop-color="#7a6650"/><stop offset=".93" stop-color="#cfc6b6"/><stop offset="1" stop-color="#a4947c"/></linearGradient>
<linearGradient id="v3" x1="0" y1="0" x2="1" y2="1"><stop offset="0" stop-color="#c9c1b0"/><stop offset=".5" stop-color="#bdb5a6"/><stop offset="1" stop-color="#a9a092"/></linearGradient>
<linearGradient id="v4" x1="0" y1="0" x2="0" y2="1"><stop offset="0" stop-color="#483028"/><stop offset=".2" stop-color="#66422e"/><stop offset=".32" stop-color="#b56a34"/><stop offset=".44" stop-color="#e08a3a"/><stop offset=".55" stop-color="#c06a2e"/><stop offset=".66" stop-color="#5a3420"/><stop offset=".8" stop-color="#2c1c14"/><stop offset=".92" stop-color="#6a4a34"/><stop offset="1" stop-color="#4a3424"/></linearGradient>
<clipPath id="k1"><rect x="63.500" y="2" width="83.500" height="44" rx="4.500"/></clipPath>
<clipPath id="k2"><rect x="148.700" y="1.500" width="83.500" height="45.200" rx="5"/></clipPath>
<clipPath id="k3"><rect x="233" y="1.500" width="84.700" height="45.200" rx="5"/></clipPath>
<clipPath id="k4"><rect x="318.900" y="1.500" width="84.100" height="45.200" rx="5"/></clipPath>
</defs>
<!-- clip1 selected -->
<rect x="62" y=".500" width="86.500" height="47" rx="6" fill="#9a6df2"/>
<g clip-path="url(#k1)"><rect x="63" y="1" width="85" height="46" fill="#1a1416"/><rect x="63" y="1" width="27" height="46" fill="url(#v1)"/><rect x="89" y="1" width="26.500" height="46" fill="url(#v1b)"/><rect x="115" y="-1" width="25.500" height="48" fill="url(#v1)"/><rect x="140" y="1" width="8" height="46" fill="url(#v1b)"/><rect x="63" y="30" width="85" height="17" fill="#0c090a" opacity=".45"/></g>
<!-- clip2 beach -->
<g clip-path="url(#k2)"><rect x="148" y="1" width="85" height="46" fill="url(#v2)"/>
<g fill="#96866e"><path d="M148 16l10-4 12-6 3 9zM174 16l10-4 13-6 3 9zM200 16l10-4 13-6 3 9zM226 16l6-3v5z"/></g>
<g fill="#6f6250"><rect x="160" y="14" width="1.200" height="20"/><rect x="186" y="14" width="1.200" height="20"/><rect x="212" y="14" width="1.200" height="20"/></g>
<g fill="#3e2e22"><path d="M150 30l6-3 3 4 5 3-12 2zM176 30l6-3 3 4 5 3-12 2zM202 30l6-3 3 4 5 3-12 2z"/></g></g>
<!-- clip3 sand -->
<g clip-path="url(#k3)"><rect x="233" y="1" width="85" height="46" fill="url(#v3)"/><rect x="258" y="1" width="1" height="46" fill="#d9d2c4" opacity=".6"/><rect x="283" y="1" width="1" height="46" fill="#d9d2c4" opacity=".6"/><rect x="258" y="5" width="25" height="18" fill="#c4c8cc" opacity=".5"/><rect x="284" y="4" width="30" height="14" fill="#c8ccd0" opacity=".45"/>
<g fill="#6a5a4e"><rect x="244" y="1" width="1.800" height="9"/><rect x="247.500" y="1" width="1.800" height="8"/><rect x="269" y="1" width="1.800" height="10"/><rect x="272.500" y="1" width="1.800" height="8"/><rect x="295" y="1" width="1.800" height="9"/><rect x="298.500" y="1" width="1.800" height="8"/></g>
<g fill="#8c8478" opacity=".75"><ellipse cx="249" cy="22" rx="2.200" ry="3"/><ellipse cx="247" cy="34" rx="2" ry="3"/><ellipse cx="272" cy="24" rx="2.200" ry="3"/><ellipse cx="278" cy="34" rx="2" ry="3"/><ellipse cx="296" cy="25" rx="2.200" ry="3.200"/><ellipse cx="297" cy="36" rx="2" ry="3"/><ellipse cx="243" cy="13" rx="2.500" ry="2"/><ellipse cx="268" cy="14" rx="2.500" ry="2"/><ellipse cx="293" cy="16" rx="2.500" ry="2"/></g></g>
<!-- clip4 sunset posts -->
<g clip-path="url(#k4)"><rect x="318" y="1" width="86" height="46" fill="url(#v4)"/>
<rect x="318" y="13" width="86" height="3" fill="#d9924e" opacity=".45"/>
<g fill="#f2a850" opacity=".8"><ellipse cx="345" cy="21" rx="7" ry="3.500"/><ellipse cx="371" cy="21" rx="7" ry="3.500"/><ellipse cx="397" cy="21" rx="6" ry="3.500"/></g>
<g fill="#4a3326"><rect x="333.500" y="17" width="4.200" height="18" rx="1"/><rect x="359.500" y="17" width="4.200" height="18" rx="1"/><rect x="385.500" y="17" width="4.200" height="18" rx="1"/></g>
<g fill="#241712"><path d="M318 35q8-3 16 0t16 0 16 0 16 0 16 0 6 0v6h-86z"/><rect x="327" y="40" width="1.200" height="6"/><rect x="353" y="40" width="1.200" height="6"/><rect x="379" y="40" width="1.200" height="6"/></g></g>
<!-- transitions -->
<circle cx="148" cy="24" r="7.800" fill="#0b0d10"/><path d="M144 21.600l4 1.700 4-1.700v4.800l-4-1.700-4 1.700z" fill="none" stroke="#8b4df5" stroke-width="1.250" stroke-linejoin="round"/>
<circle cx="232.800" cy="24" r="7.800" fill="#0b0d10"/><path d="M228.800 21.600l4 1.700 4-1.700v4.800l-4-1.700-4 1.700z" fill="none" stroke="#fff" stroke-width="1.250" stroke-linejoin="round"/>
<circle cx="318.500" cy="24" r="7.800" fill="#0b0d10"/><path d="M314.500 21.600l4 1.700 4-1.700v4.800l-4-1.700-4 1.700z" fill="none" stroke="#fff" stroke-width="1.100" stroke-linejoin="round"/>
<!-- plus button -->
<rect x="409.500" y="10" width="28.300" height="28.300" rx="5.500" fill="#34373a"/><path d="M423.600 18.800v10.800M418.200 24.200h10.800" stroke="#c4c6c8" stroke-width="1.300" stroke-linecap="round"/>
</svg>
<span style="position:absolute;left:68.2px;top:696.3px;font-size:9.24px;font-weight:bold;color:#fff;white-space:nowrap;line-height:1;transform:scaleX(0.945);transform-origin:0 50%;text-shadow:0 0 2px rgba(0,0,0,.6)">5.0s</span>
<!-- add audio -->
<div class="abs" style="left:63px;top:713.500px;width:68px;height:19.500px;border-radius:5px;background:#1b1f23"></div>
<svg class="abs" style="left:69.500px;top:718.500px" width="9" height="10" viewBox="0 0 9 10" fill="none" stroke="#e6e7e8" stroke-width="1" stroke-linejoin="round"><path d="M3 7.800V2l5.200-1.200v5.800"/><circle cx="1.900" cy="7.900" r="1.200"/><circle cx="7.100" cy="6.700" r="1.200"/></svg>
<span style="position:absolute;left:82.6px;top:719.5px;font-size:8.82px;font-weight:bold;color:#e6e7e8;white-space:nowrap;line-height:1;transform:scaleX(0.977);transform-origin:0 50%;">Add Audio</span>
<!-- playhead -->
<div class="abs" style="left:108.700px;top:634px;width:1.600px;height:105px;background:#f4f4f6"></div>
<svg class="abs" style="left:104.500px;top:619.500px" width="10" height="8" viewBox="0 0 10 8"><path d="M1.600 0h6.800A1.600 1.600 0 0 1 9.800 2.400L5.800 7a1 1 0 0 1-1.600 0L.2 2.400A1.600 1.600 0 0 1 1.600 0z" fill="#f4f4f6"/></svg>
<!-- RIGHT PANEL -->
<div class="abs" style="left:1064px;top:41px;width:296px;height:618px;border-radius:9px;box-shadow:0 2px 8px rgba(0,0,0,.55);"></div>
<div id="panel"></div>
<svg class="abs" style="left:1078px;top:52px" width="6" height="10" viewBox="0 0 6 10" fill="none" stroke="#fff" stroke-width="1.300" stroke-linecap="round" stroke-linejoin="round"><path d="M5 .800L.900 5 5 9.200"/></svg>
<span style="position:absolute;left:1091px;top:52.9px;font-size:10.08px;font-weight:bold;color:#fff;white-space:nowrap;line-height:1;transform:scaleX(1.000);transform-origin:0 50%;">More ways to publish</span>
<svg class="abs" style="left:1282px;top:52px" width="10" height="10" viewBox="0 0 10 10" fill="none" stroke="#a57cf6" stroke-width="1"><circle cx="5" cy="5" r="4.400"/><path d="M3.700 4a1.300 1.300 0 1 1 1.900 1.100c-.4.200-.6.500-.6.900" stroke-linecap="round"/><circle cx="5" cy="7.400" r=".550" fill="#a57cf6" stroke="none"/></svg>
<span style="position:absolute;left:1296px;top:53.7px;font-size:8.4px;font-weight:bold;color:#a57cf6;white-space:nowrap;line-height:1;transform:scaleX(1.030);transform-origin:0 50%;">Need help?</span>
<div class="abs" style="left:1076.500px;top:72.500px;width:269px;height:28px;border-radius:5px;background:#17181a;border:1px solid #3b3c3e"></div>
<svg class="abs" style="left:1084px;top:79px" width="14" height="14" viewBox="0 0 14 14" fill="none" stroke="#f0f0f0" stroke-width="1.300" stroke-linecap="round"><circle cx="6" cy="6" r="4.800"/><path d="M9.600 9.600l3.400 3.400"/></svg>
<span style="position:absolute;left:1105px;top:81.7px;font-size:10.5px;font-weight:normal;color:#a6a8ab;white-space:nowrap;line-height:1;transform:scaleX(1.027);transform-origin:0 50%;">How would you like to publish?</span>
<!-- clipped "selection" -->
<div class="abs" style="left:1140px;top:103.300px;width:70px;height:10px;overflow:hidden"><span style="position:absolute;left:14px;top:-0.9px;font-size:8.4px;font-weight:normal;color:#e8e8e8;white-space:nowrap;line-height:1;transform:scaleX(1.164);transform-origin:0 50%;">selection</span></div>
<!-- scrollbar -->
<div class="abs" style="left:1347px;top:101px;width:13px;height:554px;background:#2b2c2e"></div>
<div class="abs" style="left:1350.500px;top:313px;width:6.500px;height:283px;border-radius:3.500px;background:#6b6c6e"></div>
<svg class="abs" style="left:1349px;top:106px" width="10" height="6" viewBox="0 0 10 6"><path d="M5 .500L9.500 5.500H.500z" fill="#a8a9ab"/></svg>
<svg class="abs" style="left:1349px;top:645px" width="10" height="6" viewBox="0 0 10 6"><path d="M5 5.500L9.500.500H.500z" fill="#a8a9ab"/></svg>

<!-- row 1 -->
<div class="circ" style="left:1089.500px;top:121.500px"></div>
<svg class="abs" style="left:1099px;top:133px" width="17" height="11" viewBox="0 0 17 11"><path d="M4 10.500a3.300 3.300 0 0 1-.500-6.500A4.700 4.700 0 0 1 12.300 3a3.800 3.800 0 0 1 .700 7.500z" fill="#1f8be0"/><path d="M6 4.500a4 4 0 0 1 6.300-1.500 3.800 3.800 0 0 1 .700 7.500H8z" fill="#3aa5ee" opacity=".7"/></svg>
<span style="position:absolute;left:1087.5px;top:167.4px;font-size:8.4px;font-weight:normal;color:#ececec;white-space:nowrap;line-height:1;transform:scaleX(1.162);transform-origin:0 50%;">Microsoft</span>
<span style="position:absolute;left:1087.7px;top:178.4px;font-size:8.4px;font-weight:normal;color:#ececec;white-space:nowrap;line-height:1;transform:scaleX(1.111);transform-origin:0 50%;">OneDrive</span>
<div class="circ" style="left:1155.500px;top:121.500px"></div>
<svg class="abs" style="left:1164px;top:130.500px" width="18" height="17" viewBox="0 0 18 17"><circle cx="10" cy="8.500" r="7.500" fill="#e1583a"/><path d="M10 1a7.500 7.500 0 0 1 7.500 7.500H10z" fill="#f08a6a"/><rect x=".500" y="4" width="9" height="9" rx="1.200" fill="#c63c22"/><path d="M3.500 11V6h2.200a1.600 1.600 0 0 1 0 3.200H3.500" fill="none" stroke="#fff" stroke-width="1.100"/></svg>
<span style="position:absolute;left:1153.4px;top:167.4px;font-size:8.4px;font-weight:normal;color:#ececec;white-space:nowrap;line-height:1;transform:scaleX(1.159);transform-origin:0 50%;">Microsoft</span>
<span style="position:absolute;left:1149.7px;top:178.4px;font-size:8.4px;font-weight:normal;color:#ececec;white-space:nowrap;line-height:1;transform:scaleX(1.081);transform-origin:0 50%;">PowerPoint</span>
<div class="hr" style="top:209.300px"></div>

<!-- Social -->
<span style="position:absolute;left:1077.5px;top:230.6px;font-size:10.08px;font-weight:bold;color:#f4f4f4;white-space:nowrap;line-height:1;transform:scaleX(0.993);transform-origin:0 50%;">Social</span>
<span style="position:absolute;left:1305.5px;top:231.9px;font-size:8.4px;font-weight:bold;color:#a57cf6;white-space:nowrap;line-height:1;transform:scaleX(1.036);transform-origin:0 50%;">See all</span>
<div class="circ" style="left:1089.500px;top:254.500px"></div>
<svg class="abs" style="left:1098.500px;top:263.500px" width="18" height="18" viewBox="0 0 18 18"><defs><linearGradient id="ig" x1=".1" y1="1" x2=".9" y2="0"><stop offset="0" stop-color="#fdb53c"/><stop offset=".35" stop-color="#f0453f"/><stop offset=".65" stop-color="#d62f9a"/><stop offset="1" stop-color="#8a3bd4"/></linearGradient></defs><rect width="18" height="18" rx="4.500" fill="url(#ig)"/><rect x="3.500" y="3.500" width="11" height="11" rx="3.200" fill="none" stroke="#fff" stroke-width="1.300"/><circle cx="9" cy="9" r="2.600" fill="none" stroke="#fff" stroke-width="1.300"/><circle cx="12.300" cy="5.700" r=".800" fill="#fff"/></svg>
<span style="position:absolute;left:1087px;top:300.4px;font-size:8.4px;font-weight:normal;color:#ececec;white-space:nowrap;line-height:1;transform:scaleX(1.101);transform-origin:0 50%;">Instagram</span>
<div class="circ" style="left:1155.500px;top:254.500px"></div>
<svg class="abs" style="left:1164.500px;top:263.500px" width="17" height="17" viewBox="0 0 17 17"><rect width="17" height="17" rx="2.500" fill="#fff"/><rect x="3" y="5" width="11" height="7.500" rx="2" fill="#e62117"/><path d="M7.200 6.900l3 1.850-3 1.850z" fill="#fff"/></svg>
<span style="position:absolute;left:1155.5px;top:300.4px;font-size:8.4px;font-weight:normal;color:#ececec;white-space:nowrap;line-height:1;transform:scaleX(1.078);transform-origin:0 50%;">YouTube</span>
<div class="circ" style="left:1221.500px;top:254.500px"></div>
<svg class="abs" style="left:1230.500px;top:263.500px" width="17" height="17" viewBox="0 0 17 17"><rect width="17" height="17" rx="1" fill="#0a0a0c"/><path d="M9.300 3.300v7a2 2 0 1 1-1.700-2M9.300 3.300c.2 1.500 1.300 2.500 2.700 2.600" fill="none" stroke="#25d0e0" stroke-width="1.500" transform="translate(-.5 -.3)"/><path d="M9.300 3.300v7a2 2 0 1 1-1.700-2M9.300 3.300c.2 1.500 1.300 2.500 2.700 2.600" fill="none" stroke="#f0335a" stroke-width="1.500" transform="translate(.5 .4)"/><path d="M9.300 3.300v7a2 2 0 1 1-1.700-2M9.300 3.300c.2 1.500 1.300 2.500 2.700 2.600" fill="none" stroke="#fff" stroke-width="1.500"/></svg>
<span style="position:absolute;left:1226px;top:300.4px;font-size:8.4px;font-weight:normal;color:#ececec;white-space:nowrap;line-height:1;transform:scaleX(1.067);transform-origin:0 50%;">TikTok</span>
<div class="circ" style="left:1286.500px;top:254.500px"></div>
<svg class="abs" style="left:1295.500px;top:266.500px" width="18" height="11" viewBox="0 0 18 11" fill="none" stroke="#fff" stroke-width="1.700" stroke-linecap="round" stroke-linejoin="round"><path d="M1 7.500C1 4 2.500 1 4.500 1S8 4 9 5.500 11.500 10 13.800 10 17 8.500 17 6.500 15.500 1 13.500 1 10 4 9 5.500 6.500 10 4 10 1 9 1 7.500z"/></svg>
<div class="abs" style="left:1291px;top:284px;width:26px;height:11.500px;border-radius:6px;background:#8b3dff"></div>
<span style="position:absolute;left:1296.5px;top:287.3px;font-size:7.14px;font-weight:bold;color:#fff;white-space:nowrap;line-height:1;transform:scaleX(1.058);transform-origin:0 50%;">New</span>
<span style="position:absolute;left:1285.5px;top:300.4px;font-size:8.4px;font-weight:normal;color:#ececec;white-space:nowrap;line-height:1;transform:scaleX(1.088);transform-origin:0 50%;">Meta Ads</span>
<div class="hr" style="top:331.300px"></div>

<!-- Messaging -->
<span style="position:absolute;left:1077.5px;top:352.6px;font-size:10.08px;font-weight:bold;color:#f4f4f4;white-space:nowrap;line-height:1;transform:scaleX(0.979);transform-origin:0 50%;">Messaging</span>
<span style="position:absolute;left:1305.5px;top:353.9px;font-size:8.4px;font-weight:bold;color:#a57cf6;white-space:nowrap;line-height:1;transform:scaleX(1.036);transform-origin:0 50%;">See all</span>
<div class="circ" style="left:1089.500px;top:376.500px"></div>
<svg class="abs" style="left:1099.500px;top:389px" width="16" height="11" viewBox="0 0 16 11" fill="none" stroke="#fff" stroke-width="1.300" stroke-linejoin="round" stroke-linecap="round"><rect x=".700" y=".700" width="14.600" height="9.600" rx="1"/><path d="M1.500 1.500L8 6.300l6.500-4.800M1.500 9.500l4.300-4M14.500 9.500l-4.300-4"/></svg>
<span style="position:absolute;left:1096.5px;top:421.9px;font-size:8.4px;font-weight:normal;color:#ececec;white-space:nowrap;line-height:1;transform:scaleX(1.074);transform-origin:0 50%;">Email</span>
<div class="circ" style="left:1155.500px;top:376.500px"></div>
<svg class="abs" style="left:1165px;top:386.500px" width="16" height="16" viewBox="0 0 16 16"><path d="M8 .300A7.600 7.600 0 0 0 1.400 11.600L.300 15.700l4.200-1.100A7.600 7.600 0 1 0 8 .300z" fill="#fff"/><circle cx="8" cy="7.900" r="6.300" fill="#2cb742"/><path d="M5.700 4.300c-.7.500-1 1.300-.7 2.300.6 2 2.300 3.700 4.300 4.400 1 .3 1.800 0 2.300-.7l.2-.6-1.700-1-.8.700c-1-.4-2-1.400-2.400-2.400l.7-.8-1-1.800z" fill="#fff"/></svg>
<span style="position:absolute;left:1151.7px;top:421.9px;font-size:8.4px;font-weight:normal;color:#ececec;white-space:nowrap;line-height:1;transform:scaleX(1.100);transform-origin:0 50%;">WhatsApp</span>
<div class="circ" style="left:1221.500px;top:376.500px"></div>
<svg class="abs" style="left:1231px;top:386.500px" width="16" height="16" viewBox="0 0 16 16"><defs><linearGradient id="im" x1="0" y1="0" x2="0" y2="1"><stop offset="0" stop-color="#4fd95a"/><stop offset="1" stop-color="#1fae36"/></linearGradient></defs><rect width="16" height="16" rx="3.300" fill="url(#im)"/><path d="M8 3.200c3 0 5.300 1.900 5.300 4.300S11 11.800 8 11.800c-.5 0-1 0-1.400-.1-.7.600-1.500.9-2.400.9.500-.5.700-1 .8-1.600C3.600 10.200 2.700 8.900 2.700 7.500 2.700 5.100 5 3.200 8 3.200z" fill="#fff" opacity=".93"/></svg>
<span style="position:absolute;left:1219.7px;top:421.9px;font-size:8.4px;font-weight:normal;color:#ececec;white-space:nowrap;line-height:1;transform:scaleX(1.052);transform-origin:0 50%;">iMessage</span>
<div class="circ" style="left:1286.500px;top:376.500px"></div>
<svg class="abs" style="left:1296.500px;top:386.500px" width="16" height="16" viewBox="0 0 16 16"><path d="M8 .500C3.800.500.500 3.600.500 7.600c0 2.100.9 3.900 2.300 5.200v2.700l2.500-1.400c.8.200 1.700.4 2.700.4 4.200 0 7.500-3.100 7.500-7.100S12.200.500 8 .500z" fill="#1584f7"/><path d="M3.500 9.500l2.800-3.500 2 1.700 2.500-1.700 1.500 0-2.800 3.300-2-1.600-2.600 1.800z" fill="#0b2b55"/></svg>
<span style="position:absolute;left:1284.5px;top:421.9px;font-size:8.4px;font-weight:normal;color:#ececec;white-space:nowrap;line-height:1;transform:scaleX(1.066);transform-origin:0 50%;">Facebook</span>
<span style="position:absolute;left:1282px;top:432.9px;font-size:8.4px;font-weight:normal;color:#ececec;white-space:nowrap;line-height:1;transform:scaleX(1.069);transform-origin:0 50%;">Messenger</span>
<div class="hr" style="top:464.500px"></div>

<!-- Design -->
<span style="position:absolute;left:1077.5px;top:485.6px;font-size:10.08px;font-weight:bold;color:#f4f4f4;white-space:nowrap;line-height:1;transform:scaleX(0.982);transform-origin:0 50%;">Design</span>
<div class="circ" style="left:1089.500px;top:508.500px"></div>
<svg class="abs" style="left:1098.500px;top:517.500px" width="18" height="18" viewBox="0 0 18 18"><defs><linearGradient id="hz" x1="0" y1="0" x2="1" y2="1"><stop offset="0" stop-color="#fff"/><stop offset="1" stop-color="#d8dadc"/></linearGradient></defs><rect width="18" height="18" rx="3" fill="url(#hz)"/><path d="M8 0h3.500L18 13v2a3 3 0 0 1-3 3H8z" fill="#5f6266"/><path d="M6.500 8v6.500M11.500 8v6.500M6.500 11.300h5" stroke="#fff" stroke-width="1.700" fill="none"/><path d="M6.500 8v6.500" stroke="#4a4d50" stroke-width="1.700"/></svg>
<span style="position:absolute;left:1091.6px;top:553.9px;font-size:8.4px;font-weight:normal;color:#ececec;white-space:nowrap;line-height:1;transform:scaleX(1.071);transform-origin:0 50%;">Heyzine</span>
<span style="position:absolute;left:1087.7px;top:564.4px;font-size:8.4px;font-weight:normal;color:#ececec;white-space:nowrap;line-height:1;transform:scaleX(1.102);transform-origin:0 50%;">Flipbooks</span>
<div class="circ" style="left:1155.500px;top:508.500px"></div>
<svg class="abs" style="left:1164.500px;top:517.500px" width="18" height="18" viewBox="0 0 18 18"><rect x="8" width="10" height="10" rx="2" fill="#4a4b4e"/><path d="M3 0h7l8 8v7a3 3 0 0 1-3 3H3a3 3 0 0 1-3-3V3a3 3 0 0 1 3-3z" fill="#f09e2e"/><path d="M10 0l8 8h-5.500A2.500 2.500 0 0 1 10 5.500z" fill="#f7b85a"/></svg>
<span style="position:absolute;left:1143.5px;top:553.9px;font-size:8.4px;font-weight:normal;color:#ececec;white-space:nowrap;line-height:1;transform:scaleX(1.120);transform-origin:0 50%;">Simplebooklet</span>
<span style="position:absolute;left:1165.3px;top:564.4px;font-size:8.4px;font-weight:normal;color:#ececec;white-space:nowrap;line-height:1;transform:scaleX(1.133);transform-origin:0 50%;">Flip</span>
<div class="hr" style="top:595.300px"></div>

<!-- More options -->
<span style="position:absolute;left:1077.5px;top:617.6px;font-size:10.08px;font-weight:bold;color:#f4f4f4;white-space:nowrap;line-height:1;transform:scaleX(1.020);transform-origin:0 50%;">More options</span>
<span style="position:absolute;left:1305.5px;top:618.9px;font-size:8.4px;font-weight:bold;color:#a57cf6;white-space:nowrap;line-height:1;transform:scaleX(1.036);transform-origin:0 50%;">See all</span>
<div class="abs" style="left:1064px;top:640px;width:283px;height:15px;overflow:hidden">
<div class="circ" style="left:25.500px;top:2px"></div>
<div class="circ" style="left:91.500px;top:2px"></div><div class="abs" style="left:100.500px;top:10.500px;width:18px;height:18px;border-radius:4px;background:#b5b545"></div>
<div class="circ" style="left:157.500px;top:2px"></div><div class="abs" style="left:166.500px;top:10.500px;width:18px;height:18px;border-radius:4px;background:#1a9c56"></div>
<div class="circ" style="left:222.500px;top:2px"></div><div class="abs" style="left:231.500px;top:10.500px;width:18px;height:18px;border-radius:5px;background:#5fae6c"></div>
</div>
<!-- BOTTOM BAR -->
<svg class="abs" style="left:61.500px;top:747.500px" width="15" height="11" viewBox="0 0 15 11" fill="none" stroke="#fff" stroke-width="1.200" stroke-linecap="round" stroke-linejoin="round"><path d="M.700 1h10.500M.700 4.300h7.500M.700 7.600h4.300M6.300 10.300l.6-2.300 5.300-5.300a1.050 1.050 0 0 1 1.600 1.500L8.500 9.600z"/></svg>
<span style="position:absolute;left:80px;top:748.4px;font-size:10.5px;font-weight:bold;color:#fff;white-space:nowrap;line-height:1;transform:scaleX(0.976);transform-origin:0 50%;">Notes</span>
<svg class="abs" style="left:908px;top:747px" width="14" height="13" viewBox="0 0 14 13" fill="none"><rect x=".800" y=".800" width="12.400" height="7" rx="1" stroke="#fff" stroke-width="1.200"/><g fill="#6f7276"><rect x=".500" y="10" width="3.600" height="2.500" rx=".4"/><rect x="5.200" y="10" width="3.600" height="2.500" rx=".4"/><rect x="9.900" y="10" width="3.600" height="2.500" rx=".4"/></g></svg>
<div class="abs" style="left:936px;top:751.500px;width:140px;height:3px;border-radius:1.500px;background:#2b2f33"></div>
<div class="abs" style="left:936px;top:751.500px;width:45px;height:3px;border-radius:1.500px;background:#63666a"></div>
<div class="abs" style="left:974px;top:746px;width:14px;height:14px;border-radius:50%;background:#fff"></div>
<span style="position:absolute;left:1096px;top:748.2px;font-size:10.92px;font-weight:bold;color:#fff;white-space:nowrap;line-height:1;transform:scaleX(0.984);transform-origin:0 50%;">32%</span>
<div class="abs" style="left:1135.500px;top:747px;width:1px;height:12px;background:#2e3236"></div>
<div class="abs" style="left:1142px;top:742px;width:57px;height:24px;border-radius:6px;background:#2b2e32"></div>
<svg class="abs" style="left:1147px;top:747px" width="14" height="13" viewBox="0 0 14 13" fill="none"><rect x=".700" y=".700" width="12.600" height="7.200" rx="1" stroke="#fff" stroke-width="1.200"/><g fill="#fff"><rect x=".300" y="9.800" width="3.800" height="2.700" rx=".4"/><rect x="5.100" y="9.800" width="3.800" height="2.700" rx=".4"/><rect x="9.900" y="9.800" width="3.800" height="2.700" rx=".4"/></g></svg>
<span style="position:absolute;left:1166px;top:748.2px;font-size:10.92px;font-weight:bold;color:#fff;white-space:nowrap;line-height:1;transform:scaleX(0.856);transform-origin:0 50%;">Pages</span>
<span style="position:absolute;left:1211px;top:748.2px;font-size:10.92px;font-weight:bold;color:#fff;white-space:nowrap;line-height:1;transform:scaleX(0.967);transform-origin:0 50%;">0:02 / 0:21</span>
<svg class="abs" style="left:1279px;top:747px" width="13" height="13" viewBox="0 0 13 13" fill="none" stroke="#fff" stroke-width="1.200"><rect x=".700" y=".700" width="4.600" height="4.600" rx="1"/><rect x="7.700" y=".700" width="4.600" height="4.600" rx="1"/><rect x=".700" y="7.700" width="4.600" height="4.600" rx="1"/><rect x="7.700" y="7.700" width="4.600" height="4.600" rx="1"/></svg>
<svg class="abs" style="left:1307px;top:747px" width="13" height="13" viewBox="0 0 13 13" fill="none" stroke="#fff" stroke-width="1.200" stroke-linecap="round" stroke-linejoin="round"><path d="M8.500.700h3.800v3.800M12 1L7.800 5.200M4.500 12.300H.700V8.500M1 12l4.200-4.200"/></svg>
<svg class="abs" style="left:1340px;top:746px" width="15" height="15" viewBox="0 0 15 15" fill="none" stroke="#fff" stroke-width="1.200"><circle cx="7.500" cy="7.500" r="6.700"/><path d="M5.600 6a1.900 1.900 0 1 1 2.800 1.700c-.6.300-.9.700-.9 1.300" stroke-linecap="round"/><circle cx="7.500" cy="11" r=".75" fill="#fff" stroke="none"/></svg>
</body></html>
